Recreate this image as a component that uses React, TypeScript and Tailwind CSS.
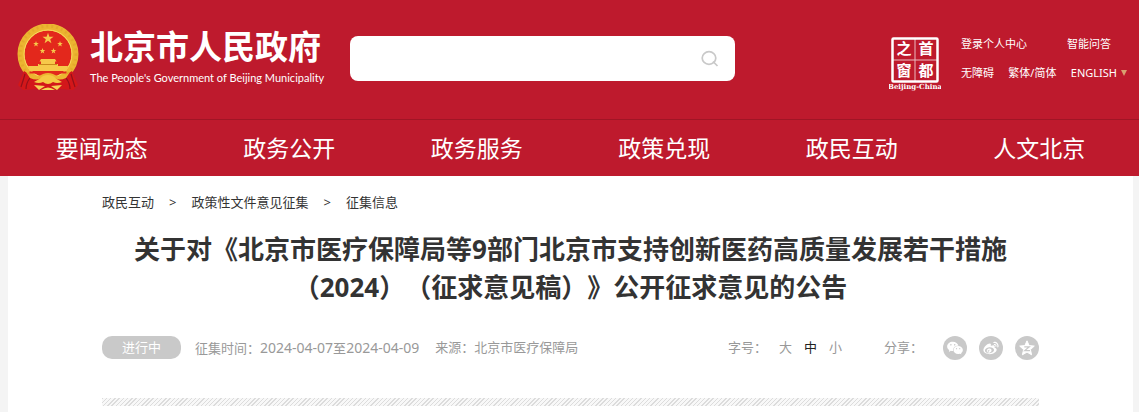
import React from 'react';
import { AiFillWechat, AiOutlineWeibo } from 'react-icons/ai';
import { clsx } from 'clsx';

const navItems = ['要闻动态', '政务公开', '政务服务', '政策兑现', '政民互动', '人文北京'];
const crumbs = ['政民互动', '政策性文件意见征集', '征集信息'];
const fontSizes = ['大', '中', '小'];

const star = '0,-10 2.4,-3.2 9.5,-3.1 3.8,1.2 5.9,8.1 0,4 -5.9,8.1 -3.8,1.2 -9.5,-3.1 -2.4,-3.2';

const Emblem: React.FC = () => (
  <svg viewBox="0 0 64 68" className="h-[68px] w-16 shrink-0" aria-hidden="true">
    <circle cx="32" cy="30" r="27" fill="#e3281c" stroke="#ecb531" strokeWidth="7" />
    <circle cx="32" cy="30" r="28" fill="none" stroke="#d99a23" strokeWidth="3" strokeDasharray="2 3" opacity="0.4" />
    <circle cx="32" cy="30" r="24" fill="none" stroke="#f9d95e" strokeWidth="1" />
    <g fill="#f6c94a">
      <polygon points={star} transform="translate(32 14.500) scale(.58)" />
      <polygon points={star} transform="translate(20 20) scale(.3)" />
      <polygon points={star} transform="translate(44 20) scale(.3)" />
      <polygon points={star} transform="translate(26.500 27) scale(.3)" />
      <polygon points={star} transform="translate(37.500 27) scale(.3)" />
      <path d="M25 35 h14 l1.500 2.500 h-1.500 v2.500 h3 v5 h-20 v-5 h3 v-2.500 h-1.500 z" />
      <path d="M12 42 h40 l-1.500 5 h-37 z" />
    </g>
    <path d="M23 40.500 h18" stroke="#c98a1c" strokeWidth="1" />
    <path d="M13.500 48.500 h37" stroke="#e3281c" strokeWidth="2" />
    <path d="M8 47 L2 61 L7 66 L20 65 L26 66 H38 L44 65 L57 66 L62 61 L56 47 L46 53 L32 56 L18 53 Z" fill="#d3171a" />
    <path d="M9 50 Q7 57 5 63 M14 54 Q10 59 10 65 M55 50 Q57 57 59 63 M50 54 Q54 59 54 65" stroke="#92101a" strokeWidth="1.200" fill="none" />
    <path d="M10 48 Q20 55 27 50 Q32 48 37 50 Q44 55 54 48 L50 54 Q43 57 39 54 L32 52 L25 54 Q21 57 14 54 Z" fill="#ecb531" />
    <path d="M18 58 Q24 55 27 52 Q32 50 37 52 Q40 55 46 58 Q41 60 37 58 Q32 62 27 58 Q23 60 18 58 Z" fill="#f5c843" />
    <path d="M18 61 L29 62 L23 66 Z M46 61 L35 62 L41 66 Z M25 66 Q32 61 39 66 Z" fill="#f6d254" />
  </svg>
);

const CapitalWindowLogo: React.FC = () => (
  <svg viewBox="0 0 52 56" className="h-14 w-[52px]" role="img" aria-label="首都之窗">
    <rect x="3.500" y="3.500" width="45" height="43" rx="1" fill="none" stroke="#fff" strokeWidth="2.500" />
    <path d="M26 3 V46 M3 25 H48" stroke="#fff" strokeWidth="1" opacity="0.7" />
    <g fill="#fff" fontSize="15" fontWeight="700" textAnchor="middle" fontFamily="'Noto Sans CJK SC', sans-serif">
      <text x="15" y="19">之</text>
      <text x="37" y="19">首</text>
      <text x="15" y="41">窗</text>
      <text x="37" y="41">都</text>
    </g>
    <text x="26" y="54" fill="#fff" fontSize="7" fontWeight="700" textAnchor="middle" fontFamily="'DejaVu Serif', serif">
      Beijing-China
    </text>
  </svg>
);

const SearchIcon: React.FC = () => (
  <svg viewBox="0 0 18 18" className="h-[18px] w-[18px]" fill="none" stroke="#c9c9c9" strokeWidth="1.700" aria-hidden="true">
    <ellipse cx="8" cy="8" rx="6.800" ry="6.300" />
    <path d="M12 11.500 L16.500 16" />
  </svg>
);

const QzoneIcon: React.FC = () => (
  <svg viewBox="0 0 16 16" className="h-4 w-4" aria-hidden="true">
    <path d="M8 .8 L10.100 5.600 L15.300 6.100 L11.400 9.600 L12.600 14.800 L8 12.100 L3.400 14.800 L4.600 9.600 L.7 6.100 L5.900 5.600 Z" fill="#fff" stroke="#fff" strokeLinejoin="round" />
    <path d="M5.300 6.800 H10.300 L5.800 10.600 H11" fill="none" stroke="#c9c9c9" strokeWidth="1.200" />
  </svg>
);

const shareItems = [
  { label: '微信', icon: <AiFillWechat className="h-[18px] w-[18px]" /> },
  { label: '微博', icon: <AiOutlineWeibo className="h-[18px] w-[18px]" /> },
  { label: 'QQ空间', icon: <QzoneIcon /> },
];

const Header: React.FC = () => (
  <header className="bg-[#be1a2d] text-white">
    <div className="flex h-[119px] items-start pr-3 pl-4">
      <a href="#" className="flex w-[304px] shrink-0 items-start gap-[10px] pt-6">
        <Emblem />
        <span className="flex flex-col whitespace-nowrap">
          <span className="text-[33px] leading-[46px] font-bold">北京市人民政府</span>
          <span className="font-['Lato',sans-serif] text-[11px] leading-4">The People's Government of Beijing Municipality</span>
        </span>
      </a>
      <form className="mt-9 ml-[30px] flex h-[45px] w-[385px] items-center rounded-lg bg-white pr-4">
        <input type="text" aria-label="搜索" className="h-full min-w-0 flex-1 rounded-lg px-4 text-sm text-gray-700 outline-none" />
        <button type="button" aria-label="搜索">
          <SearchIcon />
        </button>
      </form>
      <div className="ml-auto flex gap-5 pt-[35px]">
        <CapitalWindowLogo />
        <div className="flex w-[166px] flex-col text-[11px]">
          <div className="flex justify-between pr-4 leading-[18px]">
            <a href="#">登录个人中心</a>
            <a href="#">智能问答</a>
          </div>
          <div className="mt-[11px] flex justify-between leading-[18px]">
            <a href="#">无障碍</a>
            <a href="#">繁体/简体</a>
            <a href="#" className="flex items-center gap-1">
              ENGLISH
              <svg viewBox="0 0 6 6" className="h-[6px] w-[6px]" aria-hidden="true">
                <path d="M0 0 H6 L3 6 Z" fill="#d9a070" />
              </svg>
            </a>
          </div>
        </div>
      </div>
    </div>
    <nav className="grid grid-cols-6 border-t border-[#a01525] pr-[6px] pl-2 text-center text-[23px] leading-[56px]">
      {navItems.map((item) => (
        <a key={item} href="#">{item}</a>
      ))}
    </nav>
  </header>
);

const App: React.FC = () => {
  return (
    <div className="min-h-screen bg-[#f4f4f4] font-['Noto_Sans','Noto_Sans_CJK_SC',sans-serif]">
      <Header />
      <main className="mr-[6px] ml-2 min-h-[236px] bg-white px-[94px] pt-4">
        <div className="flex gap-[15px] text-[13px] leading-5 text-[#333]">
          {crumbs.map((crumb, idx) => (
            <React.Fragment key={crumb}>
              {idx > 0 && <span>&gt;</span>}
              <a href="#">{crumb}</a>
            </React.Fragment>
          ))}
        </div>

        <h1 className="mt-[18px] text-center text-[26px] leading-[38px] font-bold text-[#333] [text-spacing-trim:space-all]">
          关于对《北京市医疗保障局等9部门北京市支持创新医药高质量发展若干措施
          <br />
          （2024）（征求意见稿）》公开征求意见的公告
        </h1>

        <div className="mt-[30px] flex h-6 items-center text-[13px] text-[#999]">
          <span className="w-[79px] self-start rounded-[10px] bg-[#c9c9c9] text-center leading-[23px] text-white">进行中</span>
          <span className="ml-[14px]">
            征集时间：<span className="text-sm">2024-04-07</span>至<span className="text-sm">2024-04-09</span>
          </span>
          <span className="ml-4">来源：北京市医疗保障局</span>
          <div className="ml-auto flex items-center">
            <span>字号：</span>
            <div className="ml-3 flex gap-3">
              {fontSizes.map((size) => (
                <button key={size} type="button" className={clsx(size === '中' && 'text-[#222]')}>{size}</button>
              ))}
            </div>
            <span className="ml-[42px]">分享：</span>
            <div className="ml-5 flex gap-3">
              {shareItems.map((s) => (
                <a key={s.label} href="#" aria-label={s.label} className="flex h-6 w-6 items-center justify-center rounded-full bg-[#c9c9c9] text-white">
                  {s.icon}
                </a>
              ))}
            </div>
          </div>
        </div>

        <div className="mt-[38px] h-2 bg-[repeating-linear-gradient(135deg,#dcdcdc_0px,#dcdcdc_1px,#f8f8f8_1px,#f8f8f8_3px)]" />
      </main>
    </div>
  );
};

export default App;
